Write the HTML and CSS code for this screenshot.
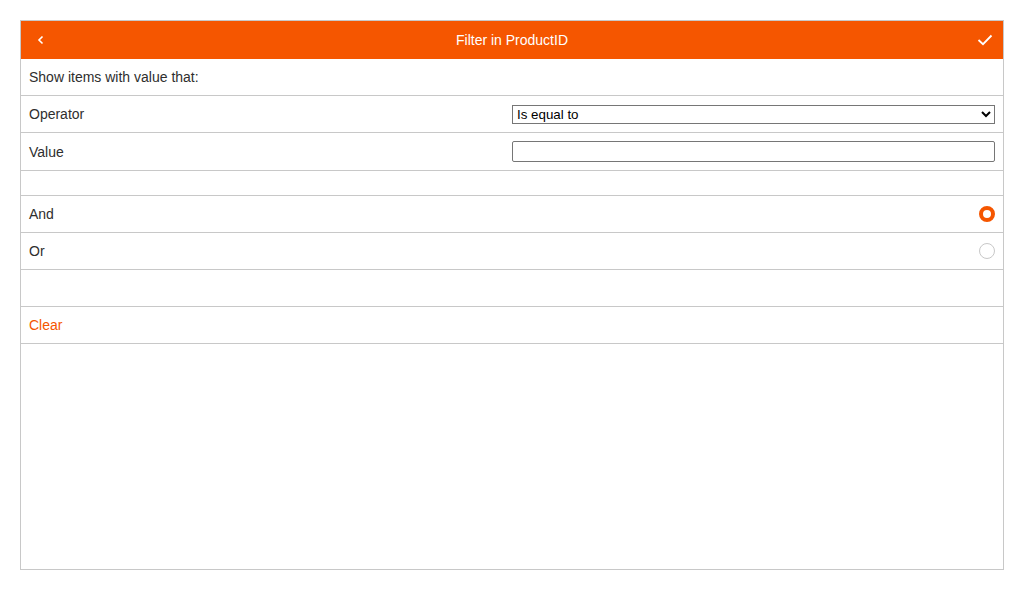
FILE: index.html
```html
<!DOCTYPE html>
<html>
<head>
<meta charset="utf-8">
<link rel="stylesheet" href="styles.css">
</head>
<body>
<div class="view">
  <div class="header">
    <span class="hbtn back">
      <svg width="12" height="12" viewBox="0 0 12 12"><path d="M7.5 2.5 L4 6 L7.5 9.5" fill="none" stroke="#fff" stroke-width="1.6"/></svg>
    </span>
    <span class="title">Filter in ProductID</span>
    <span class="hbtn check">
      <svg width="16" height="14" viewBox="0 0 16 14"><path d="M1.5 7 L6 11.2 L14.5 2.5" fill="none" stroke="#fff" stroke-width="1.8"/></svg>
    </span>
  </div>
  <div class="row"><span>Show items with value that:</span></div>
  <div class="row">
    <span>Operator</span>
    <select class="sel"><option>Is equal to</option></select>
  </div>
  <div class="row tall">
    <span>Value</span>
    <input class="inp" type="text">
  </div>
  <div class="row spacer"></div>
  <div class="row">
    <span>And</span>
    <span class="radio on"></span>
  </div>
  <div class="row">
    <span>Or</span>
    <span class="radio"></span>
  </div>
  <div class="row"></div>
  <div class="row"><span class="clear">Clear</span></div>
</div>
</body>
</html>
```
FILE: styles.css
```css
html, body { margin: 0; padding: 0; background: #fff; }
body { padding: 20px; font-family: "Liberation Sans", Arial, sans-serif; font-size: 14px; color: #2e2e2e; }
.view { border: 1px solid #c8c8c8; height: 548px; box-sizing: content-box; }
.header { height: 38px; background: #f55600; color: #fff; display: flex; align-items: center; justify-content: space-between; padding: 0 10px 0 14px; }
.title { font-size: 14px; }
.hbtn { display: flex; align-items: center; }
.row { height: 36px; border-bottom: 1px solid #c8c8c8; display: flex; align-items: center; justify-content: space-between; padding: 0 8px; }
.row.tall { height: 37px; }
.row.spacer { height: 24px; }
.sel { width: 483px; height: 19px; font-family: "Liberation Sans", Arial, sans-serif; font-size: 13.333px; border: 1px solid #767676; border-radius: 0; background: #fff; color: #000; padding: 0; margin: 0; }
.inp { width: 483px; height: 21px; box-sizing: border-box; border: 1px solid #767676; border-radius: 2px; margin: 0; padding: 0 2px; }
.radio { width: 16px; height: 16px; box-sizing: border-box; border: 1px solid #c8c8c8; border-radius: 50%; }
.radio.on { border: 4px solid #f55600; }
.clear { color: #f55600; }
```
